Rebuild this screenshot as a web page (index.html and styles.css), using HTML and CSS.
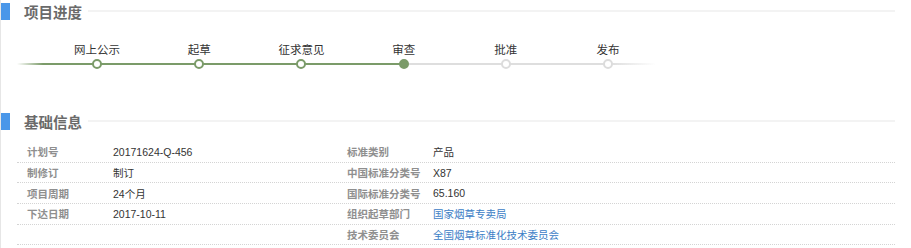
FILE: index.html
```html
<!DOCTYPE html>
<html lang="zh-CN">
<head>
    <meta charset="UTF-8">
    <title>项目详情</title>
    <link rel="stylesheet" href="styles.css">
</head>
<body>
    <div class="page">
        <div class="section-head">
            <span class="mark"></span>
            <span class="head-text">项目进度</span>
            <span class="rule"></span>
        </div>

        <div class="progress">
            <div class="step done"><span class="step-name">网上公示</span><span class="dot"></span></div>
            <div class="step done"><span class="step-name">起草</span><span class="dot"></span></div>
            <div class="step done"><span class="step-name">征求意见</span><span class="dot"></span></div>
            <div class="step current"><span class="step-name">审查</span><span class="dot"></span></div>
            <div class="step"><span class="step-name">批准</span><span class="dot"></span></div>
            <div class="step"><span class="step-name">发布</span><span class="dot"></span></div>
        </div>

        <div class="section-head second">
            <span class="mark"></span>
            <span class="head-text">基础信息</span>
            <span class="rule"></span>
        </div>

        <div class="info">
            <div class="info-row">
                <span class="label">计划号</span>
                <span class="value">20171624-Q-456</span>
                <span class="label">标准类别</span>
                <span class="value">产品</span>
            </div>
            <div class="info-row">
                <span class="label">制修订</span>
                <span class="value">制订</span>
                <span class="label">中国标准分类号</span>
                <span class="value">X87</span>
            </div>
            <div class="info-row">
                <span class="label">项目周期</span>
                <span class="value">24个月</span>
                <span class="label">国际标准分类号</span>
                <span class="value">65.160</span>
            </div>
            <div class="info-row">
                <span class="label">下达日期</span>
                <span class="value">2017-10-11</span>
                <span class="label">组织起草部门</span>
                <span class="value"><a href="#">国家烟草专卖局</a></span>
            </div>
            <div class="info-row">
                <span class="label"></span>
                <span class="value"></span>
                <span class="label">技术委员会</span>
                <span class="value"><a href="#">全国烟草标准化技术委员会</a></span>
            </div>
        </div>
    </div>
</body>
</html>
```

FILE: styles.css
```css
body {
    margin: 0;
    background: #fff;
    font-family: "Liberation Sans", "Noto Sans CJK SC", sans-serif;
    color: #333;
}
.page {
    width: 911px;
    height: 248px;
    box-sizing: border-box;
    border-left: 1px solid #e6e6e6;
    overflow: hidden;
}
.section-head {
    display: flex;
    align-items: center;
    height: 22px;
    margin-left: -1px;
}
.section-head.second {
    margin-top: 41px;
}
.mark {
    width: 10px;
    height: 17px;
    background: #4a97e9;
}
.head-text {
    margin-left: 14px;
    font-size: 14.5px;
    font-weight: bold;
    color: #6a6a6a;
}
.rule {
    flex: 1;
    height: 2px;
    margin: 0 16px 0 6px;
    background: #f3f3f3;
}

/* progress */
.progress {
    display: flex;
    width: 639px;
    margin: 20px 0 0 16px;
    padding-left: 29px;
    box-sizing: border-box;
    background: linear-gradient(to right, rgba(123, 155, 105, 0) 0, #7b9b69 26px, #7b9b69 387px, #dedede 387px, #dedede 595px, rgba(222, 222, 222, 0) 639px) no-repeat;
    background-size: 100% 2px;
    background-position: 0 21px;
}
.step {
    width: 102.2px;
    flex: none;
    display: flex;
    flex-direction: column;
    align-items: center;
}
.step-name {
    font-size: 11.5px;
    line-height: 16px;
    color: #333;
}
.dot {
    width: 10px;
    height: 10px;
    margin-top: 1px;
    box-sizing: border-box;
    border: 2px solid #dcdcdc;
    border-radius: 50%;
    background: #fff;
}
.step.done .dot {
    border-color: #7b9b69;
}
.step.current .dot {
    border-color: #7b9b69;
    background: #7b9b69;
}

/* info table */
.info {
    margin: 10px 16px 0 16px;
}
.info-row {
    display: grid;
    grid-template-columns: 96px 234px 86px 1fr;
    align-items: center;
    height: 20.7px;
    box-sizing: border-box;
    border-bottom: 1px dotted #d4d4d4;
    font-size: 10.5px;
}
.label {
    padding-left: 10px;
    color: #8f8f8f;
    font-weight: bold;
}
.info-row .label:nth-child(3) {
    padding-left: 0;
}
.value {
    color: #333;
}
.value a {
    color: #3c80c6;
    text-decoration: none;
}
```
